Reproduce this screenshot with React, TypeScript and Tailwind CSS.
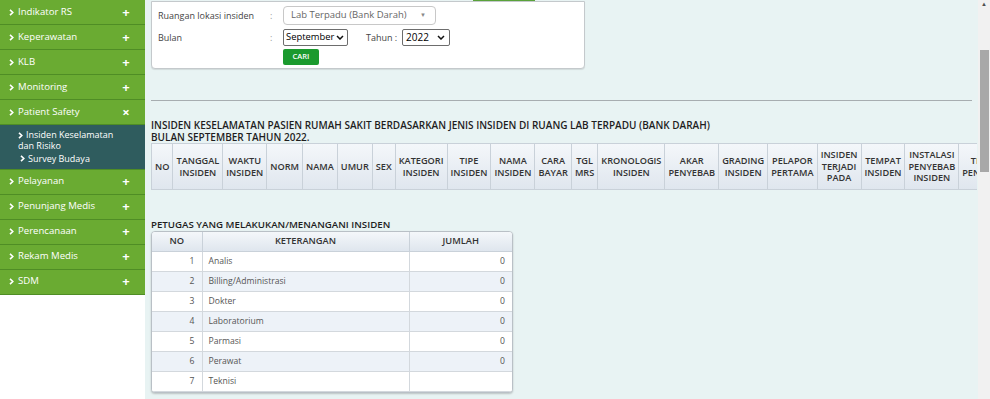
import React from "react";

const menu = [
  "Indikator RS",
  "Keperawatan",
  "KLB",
  "Monitoring",
];
const menu2 = ["Pelayanan", "Penunjang Medis", "Perencanaan", "Rekam Medis", "SDM"];

const heads: string[][] = [
  ["NO"],
  ["TANGGAL", "INSIDEN"],
  ["WAKTU", "INSIDEN"],
  ["NORM"],
  ["NAMA"],
  ["UMUR"],
  ["SEX"],
  ["KATEGORI", "INSIDEN"],
  ["TIPE", "INSIDEN"],
  ["NAMA", "INSIDEN"],
  ["CARA", "BAYAR"],
  ["TGL", "MRS"],
  ["KRONOLOGIS", "INSIDEN"],
  ["AKAR", "PENYEBAB"],
  ["GRADING", "INSIDEN"],
  ["PELAPOR", "PERTAMA"],
  ["INSIDEN", "TERJADI", "PADA"],
  ["TEMPAT", "INSIDEN"],
  ["INSTALASI", "PENYEBAB", "INSIDEN"],
  ["TINDAKAN", "PENANGANAN"],
  ["KETERANGAN"],
];

const petugas: [number, string, string][] = [
  [1, "Analis", "0"],
  [2, "Billing/Administrasi", "0"],
  [3, "Dokter", "0"],
  [4, "Laboratorium", "0"],
  [5, "Parmasi", "0"],
  [6, "Perawat", "0"],
  [7, "Teknisi", ""],
];

function Chevron() {
  return (
    <svg width="5" height="7" viewBox="0 0 5 7" className="shrink-0">
      <path d="M1 0.8 L3.8 3.5 L1 6.2" stroke="white" strokeWidth="1.6" fill="none" />
    </svg>
  );
}

function MenuItem({ label, open }: { label: string; open?: boolean }) {
  return (
    <div className="flex h-[25px] shrink-0 items-center border-b border-[#4f8d25] bg-[#6aab32] pl-[9px] pr-[14px] text-[9.6px] text-white">
      <Chevron />
      <span className="ml-[4px] flex-1">{label}</span>
      <span className="w-[10px] text-center text-[13px] font-bold leading-none">{open ? "×" : "+"}</span>
    </div>
  );
}

function Caret() {
  return (
    <svg width="8" height="5" viewBox="0 0 8 5">
      <path d="M1 1 L4 4 L7 1" stroke="#111" strokeWidth="1.5" fill="none" />
    </svg>
  );
}

export default function App() {
  return (
    <div className="flex h-[399px] w-[990px] overflow-hidden bg-[#e8f3f3] font-['Open_Sans',sans-serif]">
      <aside className="flex w-[145px] shrink-0 flex-col bg-white">
        {menu.map((m) => (
          <MenuItem key={m} label={m} />
        ))}
        <MenuItem label="Patient Safety" open />
        <div className="shrink-0 bg-[#2f5c5e] pb-[3px] pt-[5px] text-[9px] text-white">
          <div className="pl-[18px] pr-2 leading-[10px]">
            <span className="inline-flex items-center gap-[3px]">
              <Chevron />
              Insiden Keselamatan
            </span>
            <div>dan Risiko</div>
          </div>
          <div className="flex h-[15px] items-center gap-[3px] pl-[20px] pt-[1px]">
            <Chevron />
            Survey Budaya
          </div>
        </div>
        <div className="h-[1px] shrink-0 bg-[#4f8d25]" />
        {menu2.map((m) => (
          <MenuItem key={m} label={m} />
        ))}
      </aside>

      <main className="w-[833px] shrink-0 pl-[6px]">
        <div className="flex h-[1px]">
          <div className="ml-[322px] w-[62px] bg-[#5aa23a]" />
        </div>
        <div className="w-[434px] rounded-b-[4px] border border-[#c4c9cc] bg-white px-[6px] pb-[3px] pt-[3px] text-[9px] text-[#444] shadow-[0_1px_1px_rgba(0,0,0,0.1)]">
          <div className="flex h-[21px] items-center">
            <span className="w-[112px]">Ruangan lokasi insiden</span>
            <span className="w-[13px] text-[#999]">:</span>
            <div className="flex h-[19px] w-[153px] items-center justify-between rounded-[4px] border border-[#c8c8c8] pl-[7px] pr-[9px] text-[9.5px] text-[#666]">
              <span>Lab Terpadu (Bank Darah)</span>
              <span className="text-[6px] text-[#888]">▼</span>
            </div>
          </div>
          <div className="mt-[3px] flex h-[17px] items-center">
            <span className="w-[112px]">Bulan</span>
            <span className="w-[13px] text-[#999]">:</span>
            <div className="flex h-[17px] w-[65px] items-center justify-between rounded-[2px] border border-[#6d6d6d] pl-[2px] pr-[3px] text-[9.4px] text-black">
              <span>September</span>
              <Caret />
            </div>
            <span className="ml-[18px] w-[36px]">Tahun :</span>
            <div className="flex h-[17px] w-[48px] items-center justify-between rounded-[2px] border border-[#6d6d6d] pl-[3px] pr-[4px] text-[10px] text-black">
              <span>2022</span>
              <Caret />
            </div>
          </div>
          <div className="mt-[3px] flex">
            <div className="ml-[125px] flex h-[16px] w-[36px] items-center justify-center rounded-[2px] bg-[#1b9a2e] text-[7.5px] font-semibold text-white">
              CARI
            </div>
          </div>
        </div>

        <div className="mt-[31px] h-[1px] w-[821px] bg-[#a7adb0]" />

        <div className="mt-[18px] text-[10px] font-semibold leading-[12px] text-[#1e1e1e]">
          <div>INSIDEN KESELAMATAN PASIEN RUMAH SAKIT BERDASARKAN JENIS INSIDEN DI RUANG LAB TERPADU (BANK DARAH)</div>
          <div>BULAN SEPTEMBER TAHUN 2022.</div>
        </div>

        <div className="w-[826px] overflow-hidden">
          <table className="border-collapse shadow-[0_2px_2px_rgba(0,0,0,0.15)]">
            <thead>
              <tr className="h-[46px] bg-gradient-to-b from-[#f4f7fa] to-[#dfe6ee]">
                {heads.map((h, i) => (
                  <th
                    key={i}
                    className="whitespace-nowrap border border-[#c9d1d9] px-[3px] text-center text-[9.2px] font-semibold leading-[11.5px] text-[#333]"
                  >
                    {h.map((l, j) => (
                      <div key={j}>{l}</div>
                    ))}
                  </th>
                ))}
              </tr>
            </thead>
          </table>
        </div>

        <div className="mt-[29px] text-[9.7px] font-semibold leading-[12px] text-[#1e1e1e]">
          PETUGAS YANG MELAKUKAN/MENANGANI INSIDEN
        </div>
        <div className="w-[362px] overflow-hidden rounded-[4px] border border-[#b9c0c6] bg-white shadow-[0_1px_2px_rgba(0,0,0,0.2)]">
          <table className="w-full border-collapse text-[8.6px]">
            <thead>
              <tr className="h-[19px] bg-gradient-to-b from-[#f4f7fa] to-[#dfe6ee] text-[9.3px] text-[#333]">
                <th className="w-[50px] border-b border-r border-[#c9d1d9] font-semibold">NO</th>
                <th className="w-[207px] border-b border-r border-[#c9d1d9] font-semibold">KETERANGAN</th>
                <th className="border-b border-[#c9d1d9] font-semibold">JUMLAH</th>
              </tr>
            </thead>
            <tbody className="text-[#555]">
              {petugas.map(([n, k, j]) => (
                <tr key={n} className={`h-[20px] ${n % 2 === 0 ? "bg-[#edf2f8]" : "bg-white"}`}>
                  <td className="border-b border-r border-[#d3d8dd] pr-[7px] text-right">{n}</td>
                  <td className="border-b border-r border-[#d3d8dd] pl-[6px]">{k}</td>
                  <td className="border-b border-[#d3d8dd] pr-[7px] text-right">{j}</td>
                </tr>
              ))}
            </tbody>
          </table>
        </div>
      </main>

      <div className="flex w-[12px] shrink-0 flex-col items-center bg-[#f1f1f1]">
        <div className="mt-[1px] text-[6px] leading-[6px] text-[#505050]">▲</div>
        <div className="mt-[43px] h-[122px] w-[9px] bg-[#a8a8a8]" />
      </div>
    </div>
  );
}
